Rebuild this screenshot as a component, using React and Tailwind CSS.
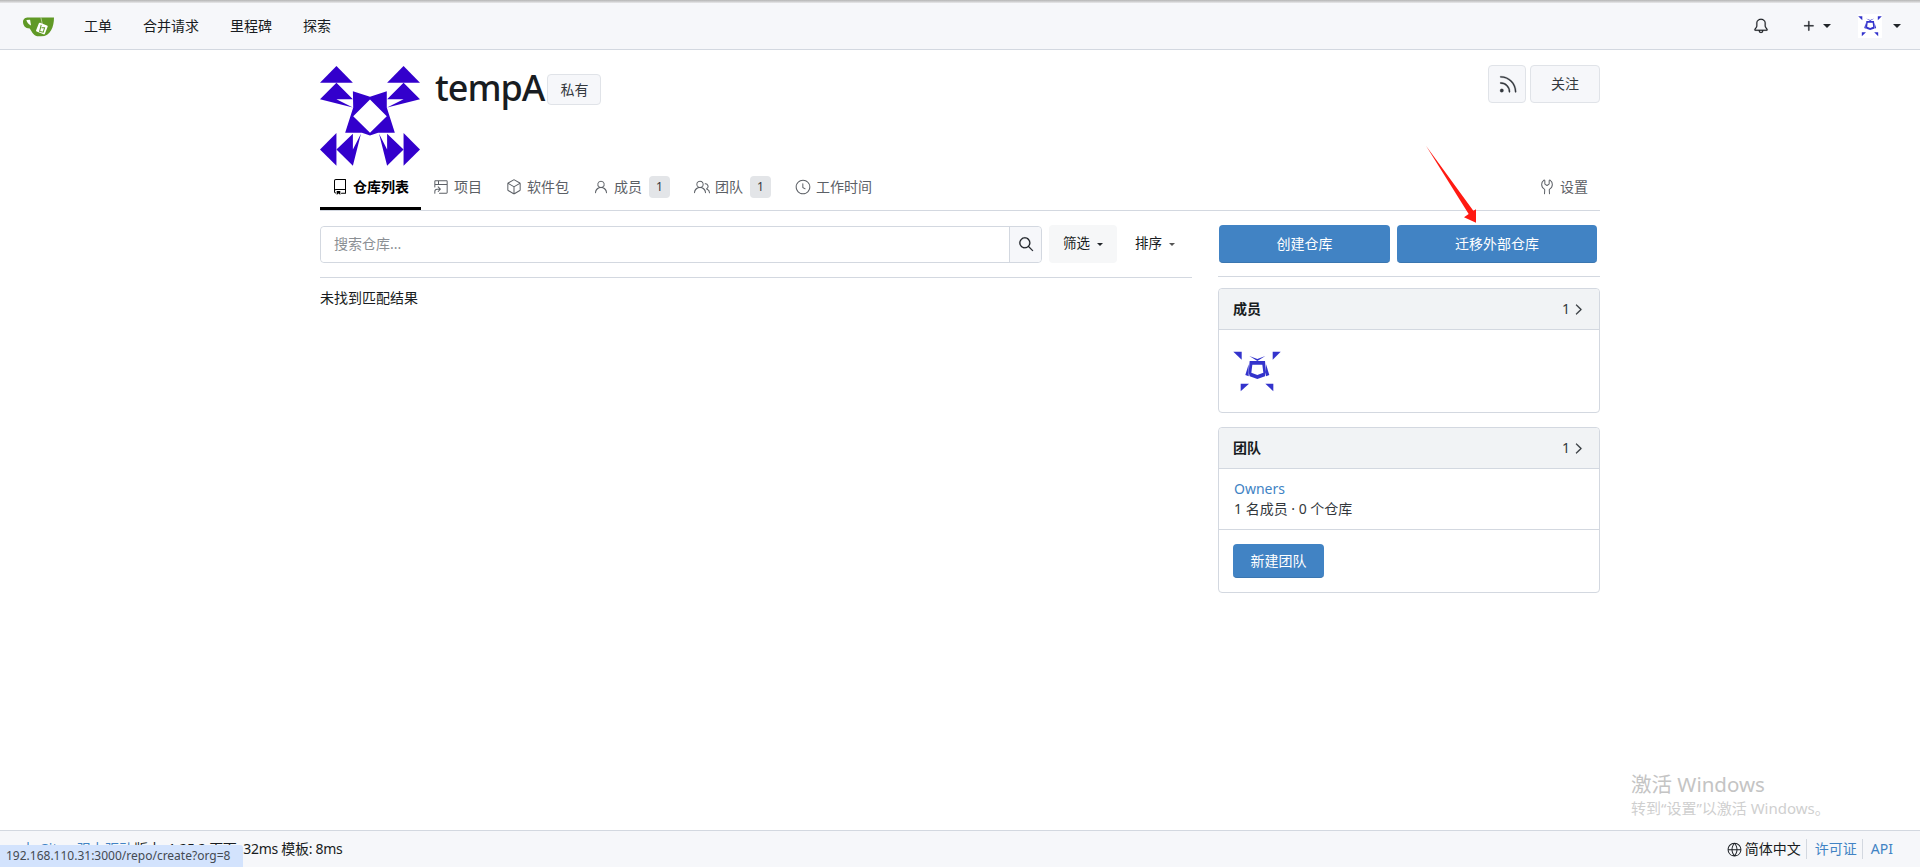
import React from "react";
import {
  GoRepo,
  GoProjectSymlink,
  GoPackage,
  GoPerson,
  GoPeople,
  GoClock,
  GoTools,
  GoBell,
  GoPlus,
  GoRss,
  GoSearch,
  GoGlobe,
  GoChevronRight,
} from "react-icons/go";

const FONT = "font-['Noto_Sans','Noto_Sans_CJK_SC',sans-serif]";

function Caret({ color = "#212529", w = 8 }) {
  return (
    <svg width={w} height={w / 2} viewBox="0 0 8 4" className="shrink-0">
      <polygon points="0,0 8,0 4,4" fill={color} />
    </svg>
  );
}

function GiteaLogo() {
  return (
    <svg width="31" height="21" viewBox="68 45 92 62" className="shrink-0">
      <path
        d="M84 49 L160 49 C160 76 150 105 122 105 L110 105 C98 103 93 88 88 82 C74 82 68 72 68 62 C68 53 75 49 84 49Z"
        fill="#609926"
      />
      <path d="M78 57 C80 65 84 70 92 73 L89 56Z" fill="#fff" />
      <path d="M121 49 L125 68" stroke="#d9e6c6" strokeWidth="2" />
      <rect x="110" y="68" width="28" height="28" rx="3" fill="#fff" transform="rotate(22 124 82)" />
      <path d="M122 71 L117 92 M123 80 L132 80 L128 93 L119 91" stroke="#609926" strokeWidth="3" fill="none" />
    </svg>
  );
}

function OrgAvatar() {
  return (
    <svg width="100" height="100" viewBox="17 33 298 298" className="shrink-0">
      <g fill="#3300cc">
        <polygon points="66,33 115,83 17,83" />
        <polygon points="66,83 115,132 66,132 115,157 17,132" />
        <polygon points="266,33 217,83 315,83" />
        <polygon points="266,83 217,132 266,132 217,157 315,132" />
        <path
          fillRule="evenodd"
          d="M115 108 L166 125 L216 108 L216 157 L240 232 L190 232 L166 240 L142 232 L92 232 L116 157Z M166 133 L116 183 L166 232 L216 183Z"
        />
        <polygon points="66,233 66,330 17,282" />
        <polygon points="115,235 115,282 139,235 115,330 66,282" />
        <polygon points="217,235 217,282 193,235 217,330 266,282" />
        <polygon points="266,233 266,330 315,282" />
      </g>
    </svg>
  );
}

function UserAvatar({ size }) {
  return (
    <svg width={size} height={size} viewBox="39 24 144 144" className="shrink-0 bg-white">
      <g fill="#3333cc">
        <polygon points="40,38 65,38 65,62" />
        <polygon points="182,38 158,38 158,62" />
        <polygon points="62,157 87,134 62,134" />
        <polygon points="160,157 136,134 160,134" />
        <path
          fillRule="evenodd"
          d="M89 66 L135 66 L138 100 L135 112 L112 120 L89 112 L86 100Z M97 77 L94 101 L112 108 L130 101 L127 77Z"
        />
        <polygon points="86,76 76,108 86,112" />
        <polygon points="138,76 148,108 138,112" />
        <polygon points="88,51 112,60 136,51 112,66" />
      </g>
    </svg>
  );
}

function Tab({ icon: Icon, label, count, active }) {
  return (
    <a
      className={`flex h-[44px] items-center px-3 pt-[1px] text-sm ${
        active
          ? "border-b-[3px] border-black font-semibold text-black"
          : "border-b-[3px] border-transparent text-[#5c6066]"
      }`}
    >
      <Icon size={16} className="mr-[5px] shrink-0" />
      <span>{label}</span>
      {count && (
        <span className="ml-[7px] flex h-[22px] w-[21px] items-center justify-center rounded-[4px] bg-[#e3e5e8] text-xs text-[#33383d]">
          {count}
        </span>
      )}
    </a>
  );
}

function CardHeader({ title, count }) {
  return (
    <div className="flex h-[41px] items-center justify-between rounded-t-[4px] border-b border-[#d3d8e0] bg-[#f1f3f5] pl-[14px] pr-3 text-sm">
      <span className="font-semibold text-[#181c21]">{title}</span>
      <span className="flex items-center text-[#33383d]">
        {count}
        <GoChevronRight size={17} stroke="currentColor" strokeWidth={0.5} />
      </span>
    </div>
  );
}

export default function App() {
  return (
    <div className={`relative flex h-[867px] flex-col overflow-hidden bg-white text-sm text-[#181c21] ${FONT}`}>
      <div className="h-[3px] bg-gradient-to-b from-[#b5b5b5] to-[#e8e8ea]" />

      {/* navbar */}
      <nav className="flex h-[47px] items-center border-b border-[#d3d8e0] bg-[#f6f7fa] pl-[23px] pr-[19px]">
        <GiteaLogo />
        <div className="ml-[30px] flex gap-[31px] text-[#181c21]">
          <a>工单</a>
          <a>合并请求</a>
          <a>里程碑</a>
          <a>探索</a>
        </div>
        <div className="ml-auto flex items-center">
          <GoBell size={16} stroke="currentColor" strokeWidth={0.3} className="text-[#181c21]" />
          <GoPlus size={16} stroke="currentColor" strokeWidth={0.5} className="ml-[32px] text-[#181c21]" />
          <span className="ml-[6px]">
            <Caret />
          </span>
          <span className="ml-[27px]">
            <UserAvatar size={24} />
          </span>
          <span className="ml-[11px]">
            <Caret />
          </span>
        </div>
      </nav>

      <main className="mx-auto w-[1280px] flex-1">
        {/* org header */}
        <div className="flex pt-4">
          <OrgAvatar />
          <h1 className="ml-[15px] text-[36px] font-medium leading-[44px] tracking-[-1px] text-[#181c21]">tempA</h1>
          <span className="ml-[3px] mt-2 flex h-[31px] w-[54px] items-center justify-center rounded-[4px] border border-[#e0e3e8] bg-[#f6f7fa] text-sm text-[#33383d]">
            私有
          </span>
          <div className="-mt-px ml-auto flex items-start gap-[4px]">
            <button className="flex h-[38px] w-[38px] items-center justify-center rounded-[4px] border border-[#e0e3e8] bg-[#f6f7fa] text-[#33383d]">
              <GoRss size={21} stroke="currentColor" strokeWidth={0.3} />
            </button>
            <button className="h-[38px] w-[70px] rounded-[4px] border border-[#e0e3e8] bg-[#f6f7fa] text-sm text-[#33383d]">
              关注
            </button>
          </div>
        </div>

        {/* tabs */}
        <div className="flex border-b border-[#d3d8e0]">
          <Tab icon={GoRepo} label="仓库列表" active />
          <Tab icon={GoProjectSymlink} label="项目" />
          <Tab icon={GoPackage} label="软件包" />
          <Tab icon={GoPerson} label="成员" count="1" />
          <Tab icon={GoPeople} label="团队" count="1" />
          <Tab icon={GoClock} label="工作时间" />
          <div className="ml-auto">
            <Tab icon={GoTools} label="设置" />
          </div>
        </div>

        <div className="mt-[14px] flex gap-[26px]">
          {/* repo list */}
          <div className="w-[872px]">
            <div className="flex items-center">
              <div className="flex h-[37px] w-[722px] rounded-[4px] border border-[#d3d8e0]">
                <input
                  placeholder="搜索仓库..."
                  className="min-w-0 flex-1 rounded-l-[4px] bg-white px-[13px] text-sm outline-none placeholder:text-[#8b8f94]"
                />
                <button className="flex w-[32px] items-center justify-center rounded-r-[4px] border-l border-[#d3d8e0] bg-[#f6f7fa] text-[#181c21]">
                  <GoSearch size={16} stroke="currentColor" strokeWidth={0.4} />
                </button>
              </div>
              <button className="ml-[7px] flex h-[38px] w-[68px] items-center justify-center gap-[7px] rounded-[4px] bg-[#f6f7f8] text-[13.5px]">
                筛选
                <Caret w={6} />
              </button>
              <button className="ml-[18px] flex items-center gap-[7px] text-[13.5px]">
                排序
                <Caret color="#555" w={6} />
              </button>
            </div>
            <div className="mt-[14px] border-t border-[#d3d8e0] pt-[10px] text-sm">未找到匹配结果</div>
          </div>

          {/* sidebar */}
          <aside className="w-[382px]">
            <div className="flex gap-[7px] pl-px">
              <button className="h-[38px] w-[171px] rounded-[4px] border-b border-[#3a76b0] bg-[#4183c4] text-sm text-white">
                创建仓库
              </button>
              <button className="h-[38px] w-[200px] rounded-[4px] border-b border-[#3a76b0] bg-[#4183c4] text-sm text-white">
                迁移外部仓库
              </button>
            </div>
            <div className="mt-[13px] border-t border-[#d3d8e0]" />

            <section className="mt-[11px] h-[125px] rounded-[4px] border border-[#d3d8e0]">
              <CardHeader title="成员" count="1" />
              <div className="pl-[14px] pt-[17px]">
                <UserAvatar size={48} />
              </div>
            </section>

            <section className="mt-[14px] rounded-[4px] border border-[#d3d8e0]">
              <CardHeader title="团队" count="1" />
              <div className="h-[61px] border-b border-[#d3d8e0] pl-[15px] pt-[10px] text-sm leading-[20px]">
                <a className="block text-[#4183c4]">Owners</a>
                <div className="text-[#33383d]">1 名成员 · 0 个仓库</div>
              </div>
              <div className="p-[14px]">
                <button className="h-[34px] w-[91px] rounded-[4px] border-b border-[#3a76b0] bg-[#4183c4] text-sm text-white">
                  新建团队
                </button>
              </div>
            </section>
          </aside>
        </div>
      </main>

      {/* footer */}
      <footer className="flex h-[37px] items-center justify-between border-t border-[#d3d8e0] bg-[#f6f7fa] pl-[21px] pr-[27px] text-sm">
        <div className="flex items-center">
          <a className="text-[#4183c4]">由 Gitea 强力驱动</a>
          <span className="ml-px tracking-[-0.3px]">版本: 1.25.2 页面: 32ms 模板: 8ms</span>
        </div>
        <div className="flex items-center">
          <GoGlobe size={15} className="mr-[3px]" />
          <span>简体中文</span>
          <span className="mx-[5px] h-[20px] border-l border-[#d3d8e0]" />
          <a className="ml-[3px] text-[#4183c4]">许可证</a>
          <span className="mx-[5px] h-[20px] border-l border-[#d3d8e0]" />
          <a className="ml-[3px] text-[#4183c4]">API</a>
        </div>
      </footer>

      {/* browser link preview */}
      <div className="absolute bottom-0 left-0 flex h-[22px] w-[243px] items-center rounded-tr-[3px] bg-[#d3e3fd] pl-[6px] text-xs text-[#444a52]">
        192.168.110.31:3000/repo/create?org=8
      </div>

      {/* windows watermark */}
      <div className="pointer-events-none absolute left-[1631px] top-[771px] text-[#c4c4c4]">
        <div className="text-[20.5px] leading-[26px]">激活 Windows</div>
        <div className="mt-px text-[15px] leading-[20px] text-[#cfcfcf]">转到“设置”以激活 Windows。</div>
      </div>

      {/* annotation arrow */}
      <svg
        viewBox="0 0 300 720"
        className="pointer-events-none absolute left-[1400px] top-0 h-[240px] w-[100px]"
      >
        <polygon points="78,437 220,632 228,628 228,668 192,652 206,642" fill="#ff1a12" />
      </svg>
    </div>
  );
}
